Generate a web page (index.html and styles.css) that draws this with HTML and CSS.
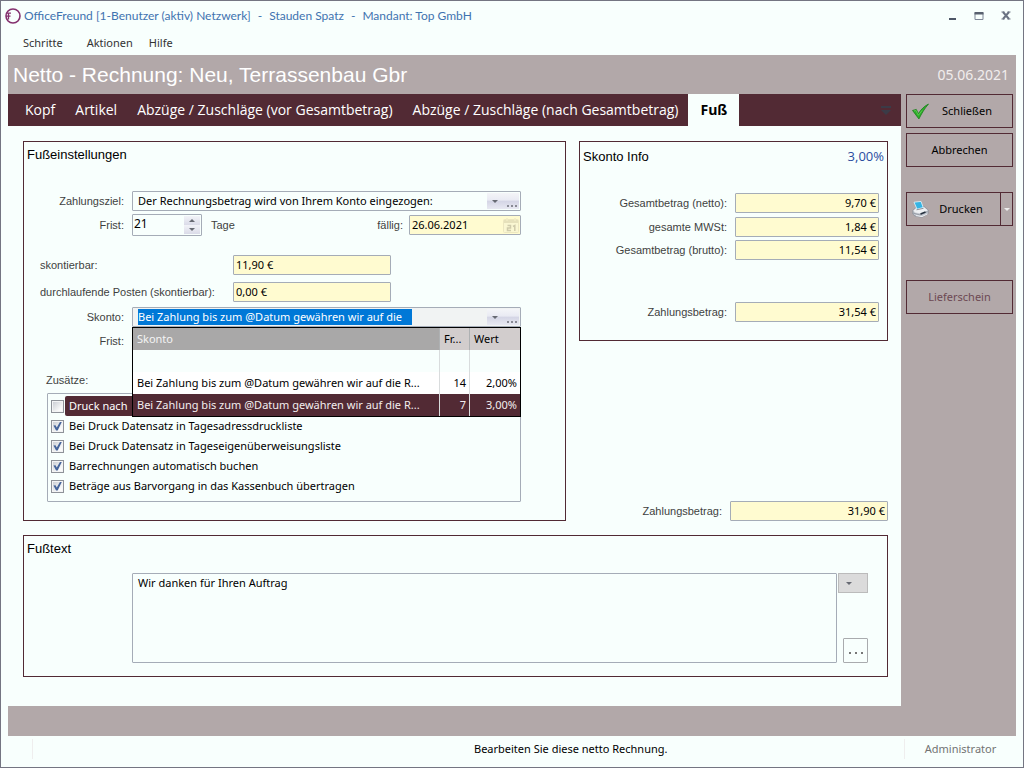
FILE: index.html
```html
<!DOCTYPE html>
<html lang="de">
<head>
<meta charset="utf-8">
<title>OfficeFreund – Netto-Rechnung</title>
<link rel="stylesheet" href="styles.css">
</head>
<body>
<div class="window">
  <header class="titlebar">
    <svg class="logo" viewBox="0 0 16 16" aria-hidden="true"><circle cx="8" cy="8" r="7" fill="none" stroke="#84306e" stroke-width="1.6"/><path d="M1 8.200H5.500M2 5.200H6M3.500 5V11.600" fill="none" stroke="#84306e" stroke-width="1.300"/></svg>
    <h1 class="app-title"><span>OfficeFreund [1-Benutzer (aktiv) Netzwerk]</span><span>-</span><span>Stauden Spatz</span><span>-</span><span>Mandant: Top GmbH</span></h1>
    <div class="window-buttons">
      <button type="button" aria-label="Minimieren"><svg viewBox="0 0 10 10"><path d="M2 7h7v2h-7z" fill="#4d5666"/></svg></button>
      <button type="button" aria-label="Maximieren"><svg viewBox="0 0 10 10"><path d="M1 2h8v6.500h-8z" fill="none" stroke="#7f8797"/><path d="M.5 1h9v2.500h-9z" fill="#59616f"/></svg></button>
      <button type="button" aria-label="Schließen"><svg viewBox="0 0 10 10"><path d="M2 1l6 7M8 1l-6 7" stroke="#6a7282" stroke-width="2"/><path d="M.5 1h3M6.500 1h3M.5 8h3M6.500 8h3" stroke="#6a7282" stroke-width="1.200"/></svg></button>
    </div>
  </header>
  <nav class="menubar">
    <button type="button" class="menu-first">Schritte</button>
    <button type="button">Aktionen</button>
    <button type="button">Hilfe</button>
  </nav>
  <div class="headline">
    <h2>Netto - Rechnung: Neu, Terrassenbau Gbr</h2>
    <time class="headline-date">05.06.2021</time>
  </div>
  <div class="workspace">
    <main class="page">
      <div class="tabs">
        <button type="button" class="tab">Kopf</button>
        <button type="button" class="tab">Artikel</button>
        <button type="button" class="tab">Abzüge / Zuschläge (vor Gesamtbetrag)</button>
        <button type="button" class="tab">Abzüge / Zuschläge (nach Gesamtbetrag)</button>
        <button type="button" class="tab active">Fuß</button>
        <button type="button" class="tab-list" aria-label="Weitere Reiter"><svg viewBox="0 0 10 9"><path d="M0 0h10v2h-10zM0 4h10L5 9z" fill="#3b3b47"/></svg></button>
      </div>
      <div class="content">
        <section class="group settings">
          <h3>Fußeinstellungen</h3>
          <div class="row row-first">
            <label class="lead" for="ziel">Zahlungsziel:</label>
            <div class="combo"><input id="ziel" value="Der Rechnungsbetrag wird von Ihrem Konto eingezogen:"><button type="button" class="combo-button" aria-label="Auswahl"><i class="caret"></i><i class="dots"></i></button></div>
          </div>
          <div class="row row-term">
            <label class="lead" for="frist">Frist:</label>
            <div class="spinner"><input id="frist" value="21"><div class="spin-buttons"><button type="button" aria-label="Mehr"><i class="caret up"></i></button><button type="button" aria-label="Weniger"><i class="caret"></i></button></div></div>
            <span class="unit">Tage</span>
            <label class="due" for="faellig">fällig:</label>
            <div class="date-field"><input id="faellig" value="26.06.2021" readonly><svg viewBox="0 0 16 15" aria-hidden="true"><rect x=".5" y="1.500" width="15" height="13" rx="1" fill="#faf7d2" stroke="#ece7c0"/><path d="M1 2h14v3h-14z" fill="#e6e1bb"/><path d="M4 0v3M12 0v3" stroke="#f2edc6" stroke-width="1.500"/><path d="M4.500 7.500h3v2.500h-3v2.500h3.500M10 8.500l1.800-1v5.500" fill="none" stroke="#cfcbab" stroke-width="1.500"/></svg></div>
          </div>
          <div class="row row-amount">
            <label class="wide" for="skbar">skontierbar:</label><input id="skbar" class="field amount" value="11,90 €" readonly>
          </div>
          <div class="row row-posts">
            <label class="wide" for="posten">durchlaufende Posten (skontierbar):</label><input id="posten" class="field amount" value="0,00 €" readonly>
          </div>
          <div class="row row-discount">
            <label class="lead" for="skonto">Skonto:</label>
            <div class="combo open"><input id="skonto" class="selected" value="Bei Zahlung bis zum @Datum gewähren wir auf die "><span class="fill"></span><button type="button" class="combo-button" aria-label="Auswahl"><i class="caret"></i><i class="dots"></i></button>
              <table class="popup">
                <thead><tr><th class="sorted">Skonto</th><th class="days">Fr...</th><th class="rate">Wert</th></tr></thead>
                <tbody>
                  <tr class="blank"><td></td><td></td><td></td></tr>
                  <tr><td>Bei Zahlung bis zum @Datum gewähren wir auf die R...</td><td>14</td><td>2,00%</td></tr>
                  <tr class="current"><td>Bei Zahlung bis zum @Datum gewähren wir auf die R...</td><td>7</td><td>3,00%</td></tr>
                </tbody>
              </table>
            </div>
          </div>
          <div class="row row-label"><span class="lead">Frist:</span></div>
          <div class="extras-title">Zusätze:</div>
          <div class="extras">
            <label class="highlight"><input type="checkbox"><span>Druck nach</span></label>
            <label><input type="checkbox" checked><span>Bei Druck Datensatz in Tagesadressdruckliste</span></label>
            <label><input type="checkbox" checked><span>Bei Druck Datensatz in Tageseigenüberweisungsliste</span></label>
            <label><input type="checkbox" checked><span>Barrechnungen automatisch buchen</span></label>
            <label><input type="checkbox" checked><span>Beträge aus Barvorgang in das Kassenbuch übertragen</span></label>
          </div>
        </section>
        <div class="side-column">
          <section class="group info">
            <div class="info-head"><h3>Skonto Info</h3><span class="percent">3,00%</span></div>
            <div class="sum first"><label for="netto">Gesamtbetrag (netto):</label><input id="netto" class="field" value="9,70 €" readonly></div>
            <div class="sum"><label for="mwst">gesamte MWSt:</label><input id="mwst" class="field" value="1,84 €" readonly></div>
            <div class="sum gross"><label for="brutto">Gesamtbetrag (brutto):</label><input id="brutto" class="field" value="11,54 €" readonly></div>
            <div class="sum pay"><label for="zb1">Zahlungsbetrag:</label><input id="zb1" class="field" value="31,54 €" readonly></div>
          </section>
          <div class="sum total"><label for="zb2">Zahlungsbetrag:</label><input id="zb2" class="field" value="31,90 €" readonly></div>
        </div>
        <section class="group footer-text">
          <h3><label for="fusstext">Fußtext</label></h3>
          <div class="memo">
            <textarea id="fusstext">Wir danken für Ihren Auftrag</textarea>
            <div class="memo-buttons">
              <button type="button" class="memo-drop" aria-label="Vorlagen"><i class="caret"></i></button>
              <button type="button" class="memo-more" aria-label="Bearbeiten"><i></i><i></i><i></i></button>
            </div>
          </div>
        </section>
      </div>
    </main>
    <aside class="actions">
      <button type="button" class="action with-icon"><svg viewBox="0 0 16 15" aria-hidden="true"><path d="M.5 6.500L4 5.500 6 9.500C8.500 5.500 11.500 2.500 15.500.5 12 4.500 9 9.500 6.500 14.500z" fill="#2fae2b" stroke="#167c17" stroke-width=".7"/><path d="M1.800 7l1.800-.5L6 11 9.500 6.500" fill="none" stroke="#5fd052" stroke-width=".8"/></svg><span>Schließen</span></button>
      <button type="button" class="action">Abbrechen</button>
      <div class="split">
        <button type="button" class="action with-icon"><svg viewBox="0 0 17 17" aria-hidden="true"><path d="M.8 9.500L4 6.300l8-.8 4.200 3.500v3.500L10 16.300 3 15 .8 13z" fill="#c3c8d0" stroke="#858b96" stroke-width=".7"/><path d="M1.500 9.500L4.500 7l7.500-.8 3.700 3L9.500 12.500 3 11.500z" fill="#eef0f3"/><path d="M2 1.200L9 .4l2.200 6.100L5 8.200z" fill="#35b4e4" stroke="#e4f6fd" stroke-width=".8"/><path d="M4.500 8.800l7-1.500" stroke="#8d939d"/><path d="M1 12l7 2 7.500-3.500" fill="none" stroke="#8b919c" stroke-width=".8"/><path d="M8.500 13l5-2" stroke="#27323f" stroke-width="1.400"/><path d="M4 14.600l6 1 5.500-2.700" fill="none" stroke="#f5f6f8" stroke-width=".9"/></svg><span>Drucken</span></button>
        <button type="button" class="split-arrow" aria-label="Druckoptionen"><i class="caret"></i></button>
      </div>
      <button type="button" class="action delivery" disabled>Lieferschein</button>
    </aside>
  </div>
  <footer class="statusbar">
    <span></span><span class="divider"></span><span class="message">Bearbeiten Sie diese netto Rechnung.</span><span class="divider user">Administrator</span>
  </footer>
</div>
</body>
</html>
```
FILE: styles.css
```css
:root {
  --paper: #f8fffd;
  --mauve: #b2a8a9;
  --wine: #522a34;
  --line: #a5acb7;
  --yellow: #fffbd0;
}
* { box-sizing: border-box; }
body {
  margin: 0;
  color: #000;
  font: 11px/16px "Noto Sans", sans-serif;
}
button, input, textarea {
  margin: 0;
  padding: 0;
  border: 0;
  border-radius: 0;
  background: none;
  color: inherit;
  font: inherit;
}
h1, h2, h3 { margin: 0; font-weight: normal; }
svg { display: block; flex: none; }

.window {
  display: flex;
  flex-direction: column;
  min-height: 100vh;
  border: 1px solid #747582;
  background: var(--paper);
}
.titlebar {
  display: flex;
  align-items: center;
  height: 30px;
  padding: 0 12px 0 4px;
}
.logo { width: 16px; height: 16px; }
.app-title {
  display: flex;
  flex: 1;
  gap: 7px;
  padding-left: 3px;
  color: #3f73b0;
  font: 12px/16px Lato, sans-serif;
}
.window-buttons { display: flex; gap: 17px; }
.window-buttons svg { width: 10px; height: 10px; }
.menubar {
  display: flex;
  gap: 16px;
  height: 24px;
  padding-left: 22px;
  color: #333;
}
.menu-first { margin-right: 8px; }

.headline {
  display: flex;
  align-items: center;
  justify-content: space-between;
  height: 39px;
  margin: 0 7px;
  padding: 0 7px 0 5px;
  background: var(--mauve);
  color: #fff;
}
.headline h2 { font: 21px/28px "Liberation Sans", Arial, sans-serif; }
.headline-date { color: #f1eded; font-size: 14px; }

.workspace {
  display: flex;
  flex: 1;
  margin: 0 7px;
  padding-bottom: 30px;
  background: var(--mauve);
}
.page { flex: 1; min-width: 0; background: var(--paper); }
.tabs {
  display: flex;
  height: 32px;
  padding-left: 7px;
  background: var(--wine);
  color: #fff;
}
.tab { padding: 0 10px; font: 14px/20px "Open Sans", sans-serif; white-space: nowrap; }
.tab.active { padding: 0 12px; background: var(--paper); color: #000; font-weight: bold; }
.tab-list { margin-left: auto; padding: 0 10px; }
.tab-list svg { width: 10px; height: 9px; }

.content {
  display: grid;
  grid-template-columns: 543fr 309fr;
  gap: 14px 13px;
  padding: 15px 13px 29px 15px;
}
.group { border: 1px solid var(--wine); }
.group h3 {
  padding: 0 3px;
  font: 13px/26px "Liberation Sans", Arial, sans-serif;
}
.settings { padding: 0 44px 18px 0; }
.row { display: flex; align-items: center; min-height: 20px; }
.lead, .wide, .due, .unit, .extras-title, .sum label {
  color: #3f3f3f;
  font: 11px/18px "Liberation Sans", Arial, sans-serif;
}
.lead { flex: none; width: 100px; margin-right: 8px; text-align: right; }
.wide { flex: none; width: 209px; padding-left: 16px; }
.row-first { margin-top: 23px; }
.row-term { min-height: 22px; margin-top: 3px; }
.row-amount { margin-top: 19px; }
.row-posts { margin-top: 7px; }
.row-discount { margin-top: 5px; }
.row-label { margin-top: 4px; }

.combo, .spinner, .date-field, .field {
  height: 20px;
  border: 1px solid var(--line);
  border-radius: 1px;
}
.combo {
  position: relative;
  display: flex;
  align-items: center;
  flex: 1;
  min-width: 0;
}
.combo input { flex: 1; min-width: 0; padding-left: 5px; }
.combo.open { background: #f1f3f3; }
.combo .selected {
  flex: none;
  width: 274px;
  margin-left: 5px;
  padding-left: 0;
  background: #0078d7;
  color: #fff;
}
.fill { flex: 1; }
.combo-button {
  display: flex;
  align-items: center;
  gap: 9px;
  width: 32px;
  height: 16px;
  margin-right: 1px;
  padding-left: 5px;
  background: linear-gradient(#f4f5f8, #e9eaf3 45%, #d4d5e5 50%, #e8e9f2);
}
.caret {
  width: 0;
  height: 0;
  border: 3px solid transparent;
  border-top-color: #676a73;
  border-bottom-width: 0;
}
.caret.up { border-width: 0 3px 3px; border-bottom-color: #676a73; }
.dots {
  align-self: flex-end;
  width: 10px;
  height: 2px;
  margin-bottom: 2px;
  background: repeating-linear-gradient(90deg, #898b95 0 2px, transparent 2px 4px);
}
.spinner { display: flex; width: 70px; height: 22px; }
.spinner input { flex: 1; min-width: 0; padding: 0 0 2px 1px; font-size: 12px; }
.spin-buttons { display: flex; flex-direction: column; width: 16px; margin: 1px; }
.spin-buttons button {
  display: flex;
  flex: 1;
  align-items: center;
  justify-content: center;
  background: linear-gradient(#f2f3f8, #dadbe8);
}
.unit { margin-left: 9px; }
.due { margin: 0 6px 0 auto; }
.date-field { display: flex; align-items: center; width: 112px; background: var(--yellow); }
.date-field input { flex: 1; min-width: 0; padding-left: 2px; }
.date-field svg { width: 16px; height: 15px; margin-right: 1px; }
.field { padding: 0 2px 2px; background: var(--yellow); }
.amount { width: 158px; }

.popup {
  position: absolute;
  z-index: 1;
  top: 19px;
  left: -1px;
  right: -1px;
  width: calc(100% + 2px);
  border: 1px solid #000;
  border-spacing: 0;
  background: #fff;
  table-layout: fixed;
}
.popup th, .popup td {
  height: 22px;
  padding: 0 4px;
  border-left: 1px solid #d9dcdd;
  white-space: nowrap;
  overflow: hidden;
}
.popup td { padding: 0 3px; text-align: right; }
.popup th { background: #d2cdcd; border-color: #aeb1b3; font-weight: normal; text-align: left; }
.popup th:first-child, .popup td:first-child { padding-left: 4px; border-left: 0; text-align: left; }
.popup .sorted { background: #a9a8a8; color: #f4f4f4; }
.popup .days { width: 30px; }
.popup .rate { width: 51px; }
.popup .blank td { background: var(--paper); }
.popup .current td { background: var(--wine); color: #f3eeee; }

.extras-title { margin-top: 20px; padding-left: 22px; }
.extras {
  margin: 4px 0 0 23px;
  padding: 2px 3px 5px;
  border: 1px solid var(--line);
  border-radius: 1px;
}
.extras label { display: flex; align-items: center; gap: 1px; height: 20px; }
.extras span { padding: 2px 4px; }
.extras .highlight span { padding-right: 20px; border-radius: 2px; background: var(--wine); color: #fff; }
.extras input {
  appearance: none;
  flex: none;
  width: 13px;
  height: 13px;
  border: 1px solid #8e9299;
  background: linear-gradient(135deg, #c5c9d0, #fafafa 75%);
  box-shadow: inset 0 0 0 1px #f3f4f5;
}
.extras input:checked::after {
  content: "";
  display: block;
  width: 9px;
  height: 9px;
  margin: 1px;
  background: #46659b;
  clip-path: polygon(5% 45%, 28% 42%, 42% 66%, 80% 0, 100% 0, 52% 100%, 34% 100%);
}

.side-column { display: flex; flex-direction: column; justify-content: space-between; }
.info { padding-bottom: 18px; }
.info-head { display: flex; justify-content: space-between; margin-top: 2px; }
.percent { padding-right: 3px; color: #2b4da0; font: 13px/24px "Open Sans", sans-serif; }
.sum { display: flex; align-items: center; justify-content: flex-end; gap: 8px; margin: 4px 8px 0 0; }
.sum .field { width: 144px; text-align: right; }
.sum.first { margin-top: 23px; }
.sum.gross { margin-top: 3px; }
.sum.pay { margin-top: 42px; }
.sum.total { margin: 0; }
.sum.total .field { width: 158px; }

.footer-text { grid-column: 1 / -1; padding: 0 19px 13px 0; }
.memo { display: flex; gap: 1px; margin: 11px 0 0 108px; }
.memo textarea {
  flex: 1;
  height: 90px;
  padding: 1px 5px;
  border: 1px solid var(--line);
  border-radius: 1px;
  resize: none;
}
.memo-buttons { display: flex; flex-direction: column; justify-content: space-between; align-items: flex-end; }
.memo-drop { display: flex; align-items: center; width: 30px; height: 20px; padding-left: 7px; border: 1px solid #bbb; background: #dbdbdb; }
.memo-more { display: flex; align-items: center; justify-content: center; gap: 4px; width: 25px; height: 25px; padding-top: 4px; border: 1px solid #a9abae; border-radius: 1px; }
.memo-more i { width: 2px; height: 2px; background: #777; }

.actions { display: flex; flex-direction: column; width: 115px; padding: 0 3px 0 5px; }
.action { flex: none; height: 34px; margin-bottom: 5px; border: 1px solid var(--wine); }
.with-icon { display: flex; align-items: center; padding-left: 5px; }
.with-icon svg { width: 17px; height: 17px; }
.with-icon span { flex: 1; padding-right: 7px; }
.split { display: flex; margin-top: 20px; }
.split .action { flex: 1; }
.split-arrow { display: flex; align-items: center; justify-content: center; width: 12px; height: 34px; border: 1px solid var(--wine); border-left: 0; }
.split-arrow .caret { border-top-color: #eee; }
.delivery { margin-top: 49px; color: #6d4853; }

.statusbar {
  display: grid;
  grid-template-columns: 24px 1fr 1fr 112px;
  align-items: center;
  height: 31px;
  margin: 0 7px;
  padding-bottom: 6px;
}
.divider { height: 20px; border-left: 1px solid #efeeee; }
.message { padding-left: 6px; }
.user { color: #737373; line-height: 20px; text-align: center; }
```
